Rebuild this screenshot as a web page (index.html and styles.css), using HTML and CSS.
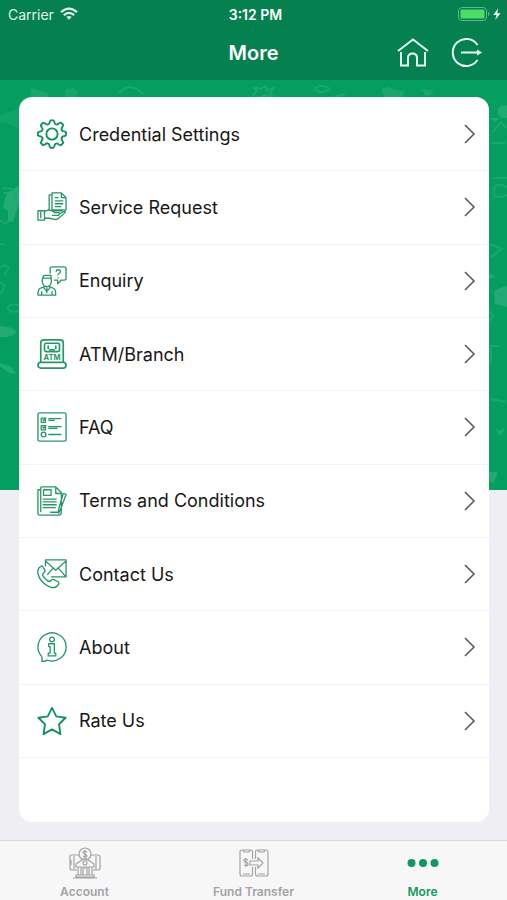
FILE: index.html
```html
<!DOCTYPE html>
<html lang="en">
<head>
<meta charset="utf-8">
<meta name="viewport" content="width=device-width, initial-scale=1">
<title>More</title>
<link rel="stylesheet" href="styles.css">
</head>
<body>
<div class="app">
  <header class="header">
    <div class="status">
      <div class="carrier">
        <span>Carrier</span>
        <svg width="18" height="14" viewBox="0 0 18 14" fill="none" stroke="currentColor" stroke-width="2.3"><path d="M1 5.2Q9-2 17 5.2M3.8 8.2Q9 3.6 14.200 8.200"/><path d="M9 12.800 6.300 10Q9 7.800 11.700 10Z" fill="currentColor" stroke="none"/></svg>
      </div>
      <span class="time">3:12 PM</span>
      <div class="battery">
        <svg width="46" height="16" viewBox="0 0 46 16" fill="none"><rect x="1.500" y="1.500" width="28" height="13" rx="3.500" stroke="#69b190"/><rect x="3.500" y="3.500" width="24" height="9" rx="1.500" fill="#4fdc65"/><path d="M31 6v4q1.500-.5 1.500-2T31 6" fill="#69b190"/><path d="M41 2.500 36.300 9h3.200l-1.300 5 5.300-6.800h-3.300z" fill="#fff"/></svg>
      </div>
    </div>
    <div class="navbar">
      <h1>More</h1>
      <div class="actions">
        <button type="button" aria-label="Home"><svg width="32" height="30" viewBox="0 0 32 30"><path d="M1 13 16 1.500 31 13M4 14v13.500h7V20q0-4.500 4.500-4.500T20 20v7.500h8V14"/></svg></button>
        <button type="button" aria-label="Log out"><svg width="32" height="30" viewBox="0 0 32 30"><path d="M26.500 7A13.500 13.500 0 1 0 26.500 22M10 14.500h18"/><path d="m26 11.500 5 3-5 3z" fill="currentColor" stroke="none"/></svg></button>
      </div>
    </div>
  </header>

  <main class="content">
    <svg class="pattern" viewBox="0 0 507 410" preserveAspectRatio="xMidYMin slice" aria-hidden="true">
      <g fill="#2cae7c">
        <path d="m0 36 8-4 11-3v19L6 43l-6-1z" opacity=".35"/>
        <path d="m5 118 3-6 5-2 4-4 2 2v16l-3 8-3 10-5-1v-10l-5-3z" opacity=".8"/>
        <path d="M0 246q12 0 17 6-8 7-17 5zM0 283l10 3 7 8-8-1-9-7z" opacity=".75"/>
        <path d="m30 8 10 2 8 3v7H32zM65 10l8-3 6 6-4 5-10-2z" opacity=".45"/>
        <path d="m381 9 8-2 6 3 10 1-3 6h-17zM421 9l10 1 3 4-8 2z" opacity=".55"/>
        <path d="M498 29q5-6 9-3v12h-6q-4-3-3-9M490 38h10l-5 4zM494 212q5-5 13-6v21l-12-3zM488 193l8 4-8 2zM495 348l5 3 4-3v3l-4 5zM488 392h9v3l-4 8-3-1z" opacity=".75"/>
      </g>
      <g fill="none" stroke="#2cae7c" stroke-width="2" opacity=".6">
        <ellipse cx="322" cy="9" rx="7" ry="3"/><path d="m252 18 5-8-4-3 8 2 4-3 2 4 7-2-4 5 3 5-8-3-7 3M335 17l10-3M119 13q11-12 24 1"/>
        <path d="M2 108 13 109M3 113h9v8l-6-3M0 140l5 4 6-5M0 164l5 1M0 188l4-3 5 3-5 7M0 203q9 1 0 11M19 225q-10-2-11 3t11 3M493 52l8-10 5 6M492 63h13M493 98h14M507 107q-13-6-13 4t13 4M490 164l12 5-11 8M488 230l5 6-5 7M490 266h9M491 266v18M491 319l15 3"/>
      </g>
    </svg>
    <nav class="card" aria-label="More options">
      <ul class="list">
        <li><a href="#credentials"><svg class="icon strong" viewBox="0 0 32 32"><circle cx="16" cy="16" r="6"/><path d="M13 5q1-3 1.500-3.500h3Q18.500 2 19 5q2 2 4-.2l2.500-1 2.500 2.500-1 2.500q-2 2 .2 4.200 3 .4 3.800 1v3q-.6 1-3.800 1.800-2 2.200-.2 4.200l1 2.500-2.500 2.500-2.500-1q-2-2-4 .2-.4 3-1.500 3.500h-3Q13 30 13 27q-2-2.200-4-.2L6.500 28 4 25.500 5 23q2-2-.2-4.200Q2 18.400 1 17.500v-3q1-.8 3.800-1.500Q7 11 5 9L4 6.500 6.500 4 9 5q2 2 4 0Z"/></svg><span>Credential Settings</span><svg class="chevron" viewBox="0 0 12 20"><path d="m1 1 9 9-9 9"/></svg></a></li>
        <li><a href="#service"><svg class="icon" viewBox="0 0 32 32"><path d="M16 1h10l5 5v13H16zM26 1v5h5M16 3h-3v16l2 1h12M19 6h4M19 9.500h9M19 12.500h9M19 15.500h7M1 20h7v10H1zM4 21v7M8 21l4-2 4 1 3 2h4q2 1 0 3h-7M23 24l5-3q3-1 2 1l-7 6q-2 2-5 1l-5-1H8"/></svg><span>Service Request</span><svg class="chevron" viewBox="0 0 12 20"><path d="m1 1 9 9-9 9"/></svg></a></li>
        <li><a href="#enquiry"><svg class="icon" viewBox="0 0 32 32"><path d="M14 8V3q0-2 2-2h13q2 0 2 2v10q0 2-2 2h-3l-4 4v-4h-4M20.500 6q0-2 2-2 2.500 0 2.500 2 0 1-1.500 2t-1 2M22.500 12v1M6 14q0-4 3-4h6v4M6 13h9M6 13q-1 3 0 5 1 4 4.500 4t4.500-4q1-2 0-5M8 21v1l-5 2q-2 1-2 7h19q0-6-2-7l-5-2v-1M7 23l3.500 4 3.500-4M10.500 23v6M5 27v4M16 27v4"/></svg><span>Enquiry</span><svg class="chevron" viewBox="0 0 12 20"><path d="m1 1 9 9-9 9"/></svg></a></li>
        <li><a href="#atm"><svg class="icon atm" viewBox="0 0 32 32"><path d="M4 25V4q0-3 3-3h18q3 0 3 3v21"/><rect x="8" y="4.500" width="16" height="9" rx="2"/><path d="M12 7v4M20 7v4M13 11.500h6"/><rect x="1" y="25" width="30" height="6" rx="3"/><text x="16" y="22.500" text-anchor="middle">ATM</text></svg><span>ATM/Branch</span><svg class="chevron" viewBox="0 0 12 20"><path d="m1 1 9 9-9 9"/></svg></a></li>
        <li><a href="#faq"><svg class="icon" viewBox="0 0 32 32"><rect x="1" y="1" width="30" height="30" rx="1.500"/><path d="M9 6.500H4.500V11H9V8M9 14.500H4.500V19H9v-3M6 8l1 1 3-3M6 16l1 1 3-3M12 7h14M12 9h7M12 15.500h14M12 17.500h10M12 24h14"/><circle cx="7" cy="24" r="2.500"/></svg><span>FAQ</span><svg class="chevron" viewBox="0 0 12 20"><path d="m1 1 9 9-9 9"/></svg></a></li>
        <li><a href="#terms"><svg class="icon" viewBox="0 0 32 32"><path d="M4 28V2q0-1 1-1h15l6 6v21q0 3-3 3H3q-2 0-2-2V4h3M20 1v7h6M7 4h8v6H7zM6 14h15M6 17h15M6 20h15M6 23h14M14 28h9M31 9l-6 16-2 4V25l5-17zM28 8l3 1"/></svg><span>Terms and Conditions</span><svg class="chevron" viewBox="0 0 12 20"><path d="m1 1 9 9-9 9"/></svg></a></li>
        <li><a href="#contact"><svg class="icon" viewBox="0 0 32 32"><path d="M9 8V1h22v18H15M9 2l11 10L31 2M11 17l6-7M31 19l-8-9M4 8q-4 2-3 8 3 10 13 14 6 2 9-3 1-2-1-3l-4-2q-2-1-3 1-2 2-4 0-4-3-5-6 0-2 2-3 1-1 0-3L6 8q-1-1-2 0Z"/></svg><span>Contact Us</span><svg class="chevron" viewBox="0 0 12 20"><path d="m1 1 9 9-9 9"/></svg></a></li>
        <li><a href="#about"><svg class="icon" viewBox="0 0 32 32"><path d="M5 26A15 15 0 1 1 11 30q-3 2-6 1 1-2 0-5Z"/><circle cx="16" cy="8" r="2.500"/><path d="M12.500 12.500h6v10h1.500v3h-8v-3h2v-7h-1.500z"/></svg><span>About</span><svg class="chevron" viewBox="0 0 12 20"><path d="m1 1 9 9-9 9"/></svg></a></li>
        <li><a href="#rate"><svg class="icon strong" viewBox="0 0 32 32"><path d="m16 2 4.500 9 10 1.500-7 7L25 30l-9-5-9 5 1.500-10.500-7-7 10-1.500z"/></svg><span>Rate Us</span><svg class="chevron" viewBox="0 0 12 20"><path d="m1 1 9 9-9 9"/></svg></a></li>
      </ul>
    </nav>
  </main>

  <nav class="tabs" aria-label="Main">
    <a href="#account"><svg viewBox="0 0 32 32"><circle cx="16" cy="7" r="6"/><path d="M18 5q-4-2-4 0 0 1 2 2t2 2q-1 2-4 0M16 3v8M10 8H3Q1 8 1 10v11q0 2 2 2h5M22 8h7q2 0 2 2v11q0 2-2 2h-5M5 9v14M27 9v14M2 13v5M7 17l9-6 9 6v3H7zM9 20v8M12 20v8M20 20v8M23 20v8M7 28h18v2H7zM4 31h24"/><circle cx="16" cy="16" r="2"/><path d="M14 28v-7h4v7"/></svg><span>Account</span></a>
    <a href="#transfer"><svg viewBox="0 0 32 32"><path d="M14.500 12V5q0-2-2-2H4Q2 3 2 5v22q0 2 2 2h8.500q2 0 2-2v-7M5 3l1 2h5l1-2M5 27h7M17.500 12V5q0-2 2-2H28q2 0 2 2v22q0 2-2 2h-8.500q-2 0-2-2v-7M20 3l1 2h5l1-2M20 27h7M10 13q-4-2-4 0 0 2 2 2t2 3q-1 1-4 0M8 11v9M12 14h8v-3l5 5-5 5v-3h-8z"/></svg><span>Fund Transfer</span></a>
    <a class="active" href="#more" aria-current="page"><svg viewBox="0 0 32 32"><circle cx="4.500" cy="16" r="4"/><circle cx="16" cy="16" r="4"/><circle cx="27.500" cy="16" r="4"/></svg><span>More</span></a>
  </nav>
</div>
</body>
</html>
```
FILE: styles.css
```css
* {
  box-sizing: border-box;
}

body {
  margin: 0;
  background: #efeef3;
  color: #171717;
  font-family: Inter, Roboto, sans-serif;
}

.app {
  display: flex;
  flex-direction: column;
  min-height: 100vh;
}

.header {
  height: 80px;
  background: #05804f;
  color: #fff;
}

.status {
  display: grid;
  grid-template-columns: 1fr auto 1fr;
  align-items: center;
  height: 28px;
  padding: 0 4px 0 8px;
  font-size: 14px;
}

.carrier {
  display: flex;
  align-items: center;
  gap: 6px;
  color: #e2f4eb;
}

.time {
  font-weight: 600;
}

.battery {
  display: flex;
  justify-content: flex-end;
}

.navbar {
  display: grid;
  grid-template-columns: 1fr auto 1fr;
  align-items: center;
  height: 50px;
  padding: 0 24px;
}

.navbar h1 {
  grid-column: 2;
  margin: 0;
  font-size: 20px;
  font-weight: 600;
}

.actions {
  display: flex;
  justify-content: flex-end;
  gap: 22px;
}

.actions button {
  display: flex;
  padding: 0;
  border: 0;
  background: none;
  color: #e6fff5;
}

.actions svg {
  fill: none;
  stroke: currentColor;
  stroke-width: 2;
}

.content {
  position: relative;
  flex: 1;
  padding: 17px 18px 18px 19px;
}

.pattern {
  position: absolute;
  top: 0;
  left: 0;
  width: 100%;
  height: 410px;
  background: #049e61;
}

.card {
  position: relative;
  height: 100%;
  min-height: 725px;
  padding-top: 1px;
  border-radius: 13px;
  background: #fff;
}

.list {
  display: grid;
  grid-auto-rows: 1fr;
  min-height: 660px;
  margin: 0;
  padding: 0;
  list-style: none;
}

.list li {
  display: grid;
  border-bottom: 1px solid #f3f3f4;
}

.list a {
  display: flex;
  align-items: center;
  gap: 12px;
  padding: 0 13px 0 18px;
  color: inherit;
  font-size: 18px;
  text-decoration: none;
}

.list span {
  flex: 1;
}

.icon {
  width: 30px;
  height: 30px;
  fill: none;
  stroke: #269668;
  stroke-width: 1.4;
  stroke-linejoin: round;
}

.strong {
  stroke: #12925e;
  stroke-width: 2;
}

.atm {
  stroke-width: 1.8;
}

.atm text {
  fill: #269668;
  stroke: none;
  font-size: 8px;
  font-weight: 700;
}

.chevron {
  width: 12px;
  height: 20px;
  fill: none;
  stroke: #555;
  stroke-width: 1.5;
}

.tabs {
  display: grid;
  grid-template-columns: repeat(3, 1fr);
  height: 60px;
  border-top: 1px solid #d9d8df;
  background: #f7f7f8;
}

.tabs a {
  display: flex;
  flex-direction: column;
  align-items: center;
  gap: 5px;
  padding-top: 6px;
  color: #a3a3a5;
  font-size: 12px;
  font-weight: 600;
  line-height: 16px;
  text-decoration: none;
}

.tabs svg {
  width: 32px;
  height: 32px;
  fill: none;
  stroke: currentColor;
  stroke-width: 1.2;
}

.tabs .active {
  color: #129761;
}

.tabs .active svg {
  fill: currentColor;
  stroke: none;
}
```
